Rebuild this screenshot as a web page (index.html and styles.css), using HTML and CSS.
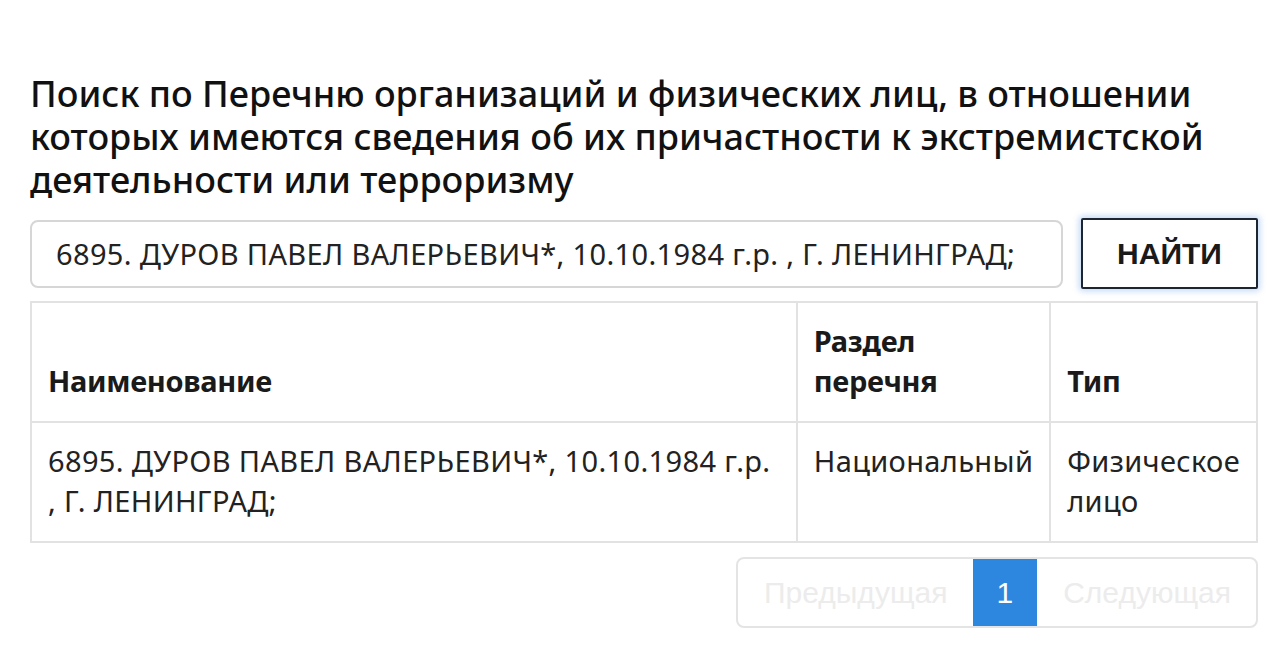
FILE: index.html
```html
<!DOCTYPE html>
<html lang="ru">
<head>
<meta charset="utf-8">
<title>Поиск по Перечню</title>
<link rel="stylesheet" href="styles.css">
</head>
<body>
<main class="page">
  <h2 class="title">Поиск по Перечню организаций и физических лиц, в отношении которых имеются сведения об их причастности к экстремистской деятельности или терроризму</h2>

  <form class="search">
    <input class="search-input" type="text" value="6895. ДУРОВ ПАВЕЛ ВАЛЕРЬЕВИЧ*, 10.10.1984 г.р. , Г. ЛЕНИНГРАД;">
    <button class="search-btn" type="button">НАЙТИ</button>
  </form>

  <table class="results">
    <thead>
      <tr>
        <th class="col-name">Наименование</th>
        <th class="col-section">Раздел перечня</th>
        <th class="col-type">Тип</th>
      </tr>
    </thead>
    <tbody>
      <tr>
        <td>6895. ДУРОВ ПАВЕЛ ВАЛЕРЬЕВИЧ*, 10.10.1984 г.р. , Г. ЛЕНИНГРАД;</td>
        <td>Национальный</td>
        <td>Физическое лицо</td>
      </tr>
    </tbody>
  </table>

  <nav class="pager-wrap">
    <ul class="pager">
      <li class="pager-item disabled"><span>Предыдущая</span></li>
      <li class="pager-item active"><span>1</span></li>
      <li class="pager-item disabled"><span>Следующая</span></li>
    </ul>
  </nav>
</main>
</body>
</html>
```

FILE: styles.css
```css
* { box-sizing: border-box; }

html, body {
  margin: 0;
  padding: 0;
  background: #fff;
}

body {
  font-family: "Noto Sans", "Open Sans", sans-serif;
  color: #222;
}

.page {
  padding: 72px 22px 0 30px;
}

.title {
  margin: 0 0 17px;
  font-size: 36px;
  line-height: 43px;
  font-weight: 500;
  color: #111;
  letter-spacing: 0;
}

.search {
  display: flex;
  align-items: center;
  gap: 18px;
  margin-bottom: 12px;
}

.search-input {
  flex: 1;
  height: 68px;
  padding: 0 24px;
  border: 2px solid #d6d6d6;
  border-radius: 8px;
  font-family: inherit;
  font-size: 29px;
  letter-spacing: 0.35px;
  color: #222;
  background: #fff;
  outline: none;
}

.search-btn {
  width: 177px;
  height: 71px;
  border: 2px solid #1d2533;
  border-radius: 2px;
  background: #fff;
  font-family: "Liberation Sans", Arial, sans-serif;
  font-weight: 700;
  font-size: 30px;
  color: #1a1a1a;
  box-shadow: 0 0 6px 2px rgba(120, 170, 235, 0.45);
}

.results {
  width: 1228px;
  border-collapse: collapse;
  border: 2px solid #e2e2e2;
  font-size: 29px;
  line-height: 40px;
  letter-spacing: 0.35px;
}

.results th,
.results td {
  border: 2px solid #e2e2e2;
  padding: 18px 16px 20px;
  text-align: left;
}

.results th {
  vertical-align: bottom;
  font-weight: 700;
  color: #1a1a1a;
  letter-spacing: -0.3px;
}

.results td {
  vertical-align: top;
  color: #222;
}

.col-name { width: 772px; }
.col-section { width: 250px; }
.col-type { width: 206px; }

.pager-wrap {
  display: flex;
  justify-content: flex-end;
  margin-top: 14px;
}

.pager {
  display: flex;
  margin: 0;
  padding: 0;
  list-style: none;
  border: 2px solid #e4e4e4;
  border-radius: 8px;
  overflow: hidden;
}

.pager-item span {
  display: block;
  height: 67px;
  line-height: 67px;
  padding: 0 25px 0 26px;
  font-family: "Liberation Sans", Arial, sans-serif;
  font-size: 30px;
}

.pager-item.disabled span {
  color: #ececec;
}

.pager-item.active span {
  background: #2d87de;
  color: #fff;
  padding: 0 24px;
}
```
